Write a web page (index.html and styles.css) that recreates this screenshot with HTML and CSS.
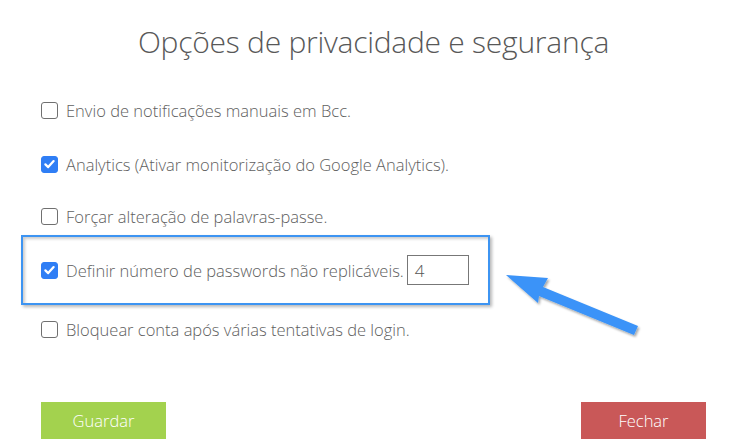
FILE: index.html
```html
<!DOCTYPE html>
<html lang="pt">
<head>
<meta charset="utf-8">
<title>Opções de privacidade e segurança</title>
<link rel="stylesheet" href="styles.css">
</head>
<body>
<div class="dialog">
  <h1 class="title">Opções de privacidade e segurança</h1>
  <div class="options">
    <label class="opt"><span class="cb"></span><span class="lbl">Envio de notificações manuais em Bcc.</span></label>
    <label class="opt gap2"><span class="cb on"><svg viewBox="0 0 16 16" width="16" height="16"><path d="M3.6 8.4 L6.6 11.3 L12.4 4.9" fill="none" stroke="#fff" stroke-width="2.4" stroke-linecap="round" stroke-linejoin="round"/></svg></span><span class="lbl">Analytics (Ativar monitorização do Google Analytics).</span></label>
    <label class="opt gap3"><span class="cb"></span><span class="lbl">Forçar alteração de palavras-passe.</span></label>
    <div class="highlight">
      <label class="opt"><span class="cb on"><svg viewBox="0 0 16 16" width="16" height="16"><path d="M3.6 8.4 L6.6 11.3 L12.4 4.9" fill="none" stroke="#fff" stroke-width="2.4" stroke-linecap="round" stroke-linejoin="round"/></svg></span><span class="lbl">Definir número de passwords não replicáveis.</span><span class="num">4</span></label>
    </div>
    <label class="opt gap5"><span class="cb"></span><span class="lbl">Bloquear conta após várias tentativas de login.</span></label>
  </div>
  <div class="actions">
    <button class="btn save">Guardar</button>
    <button class="btn close">Fechar</button>
  </div>
  <svg class="arrow" width="160" height="90" viewBox="0 0 160 90">
    <defs>
      <filter id="sh" x="-20%" y="-20%" width="140%" height="140%">
        <feDropShadow dx="1.5" dy="2" stdDeviation="1.2" flood-color="#000" flood-opacity="0.35"/>
      </filter>
    </defs>
    <g filter="url(#sh)" fill="#3a93f8">
      <polygon points="6,15 48,18 43,27 138,66 134,75 39,36 38,43"/>
    </g>
  </svg>
</div>
</body>
</html>
```
FILE: styles.css
```css
* { box-sizing: border-box; }
html, body { margin: 0; padding: 0; background: #fff; }
body {
  font-family: "Open Sans", "Liberation Sans", sans-serif;
  font-weight: 300;
  color: #606060;
}
.dialog {
  position: relative;
  width: 745px;
  height: 445px;
  padding: 20px 39px 0 41px;
}
.title {
  margin: 0;
  text-align: center;
  font-weight: 300;
  font-size: 30px;
  line-height: 44px;
  color: #585858;
  letter-spacing: -0.25px;
}
.options {
  display: flex;
  flex-direction: column;
  margin-top: 34px;
}
.opt {
  display: flex;
  align-items: center;
  height: 24px;
  font-size: 16.5px;
}
.gap2 { margin-top: 30px; }
.gap3 { margin-top: 28px; }
.gap5 { margin-top: 12px; }
.cb {
  width: 17px;
  height: 17px;
  border: 1.5px solid #707070;
  border-radius: 3px;
  margin-right: 8px;
  flex: none;
  display: flex;
  align-items: center;
  justify-content: center;
}
.cb.on {
  background: #2f7ef5;
  border-color: #2f7ef5;
}
.cb svg { display: block; }
.lbl { white-space: nowrap; }
.highlight {
  margin: 7px 0 0 -20px;
  width: 469px;
  border: 2px solid #3d94f2;
  padding: 21px 18px;
  box-shadow: 2px 2px 3px rgba(0,0,0,0.28), inset 2px 2px 3px rgba(0,0,0,0.2);
}
.num {
  margin-left: 3px;
  width: 62px;
  height: 30px;
  border: 1px solid #777;
  display: flex;
  align-items: center;
  padding-left: 7px;
  font-size: 17px;
  color: #555;
  flex: none;
}
.actions {
  display: flex;
  justify-content: space-between;
  margin-top: 61px;
}
.btn {
  width: 125px;
  height: 37px;
  border: 0;
  color: #fff;
  font-family: "Open Sans", "Liberation Sans", sans-serif;
  font-weight: 300;
  font-size: 16.5px;
  padding: 0;
}
.save { background: #a3d24e; }
.close { background: #c95858; }
.arrow {
  position: absolute;
  left: 500px;
  top: 260px;
}
```
